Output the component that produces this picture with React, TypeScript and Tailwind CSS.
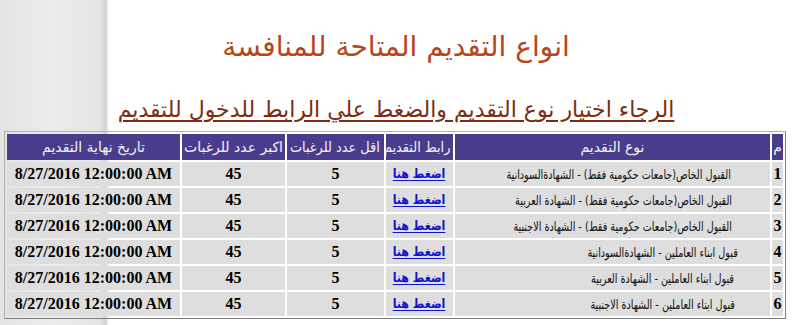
import React from "react";

const rows = [
  { n: "1", t: "القبول الخاص(جامعات حكومية فقط) - الشهادةالسودانية" },
  { n: "2", t: "القبول الخاص(جامعات حكومية فقط) - الشهادة العربية" },
  { n: "3", t: "القبول الخاص(جامعات حكومية فقط) - الشهادة الاجنبية" },
  { n: "4", t: "قبول ابناء العاملين - الشهادةالسودانية" },
  { n: "5", t: "قبول ابناء العاملين - الشهادة العربية" },
  { n: "6", t: "قبول ابناء العاملين - الشهادة الاجنبية" },
];

const ar = { fontFamily: "'DejaVu Sans', Tahoma, sans-serif" };
const serif = { fontFamily: "'Liberation Serif', 'Times New Roman', serif" };

export default function App() {
  return (
    <div className="w-[792px] h-[325px] overflow-hidden bg-[linear-gradient(to_right,#e4e4e4_0px,#ececec_50px,#e6e6e6_100px,#d0d0d0_106px,#f4f4f4_108px,#ffffff_110px)]">
      <div dir="rtl" className="flex flex-col items-center pt-[27px]" style={ar}>
        <div className="text-[28px] leading-[40px] text-[#b8461c] whitespace-nowrap">
          انواع التقديم المتاحة للمنافسة
        </div>
        <div className="mt-[28px] text-[22px] leading-[30px] text-[#7b2c12] underline underline-offset-[3px] whitespace-nowrap">
          الرجاء اختيار نوع التقديم والضغط علي الرابط للدخول للتقديم
        </div>
      </div>
      <table
        dir="rtl"
        className="ml-[4px] mt-[6px] w-[782px] table-fixed border border-t-[#b0b0b0] border-l-[#b0b0b0] border-r-[#808080] border-b-[#808080] border-separate border-spacing-[2px]"
      >
        <thead>
          <tr className="h-[26px] bg-[#4a3c8c] text-[#f4f4f4] text-[14px]" style={ar}>
            <th className="w-[11px] p-0 font-normal">م</th>
            <th className="w-[315px] p-0 font-normal">نوع التقديم</th>
            <th className="w-[67px] p-0 font-normal whitespace-nowrap">
              <span className="inline-block scale-x-[0.92]">رابط التقديم</span>
            </th>
            <th className="w-[97px] p-0 font-normal whitespace-nowrap">
              <span className="inline-block scale-x-[0.92]">اقل عدد للرغبات</span>
            </th>
            <th className="w-[103px] p-0 font-normal whitespace-nowrap">اكبر عدد للرغبات</th>
            <th className="p-0 font-normal whitespace-nowrap">تاريخ نهاية التقديم</th>
          </tr>
        </thead>
        <tbody>
          {rows.map((r) => (
            <tr key={r.n} className="h-[24px] bg-[#dedede] text-black">
              <td className="p-0 text-center text-[16px] font-bold" style={serif}>
                {r.n}
              </td>
              <td className="p-0 pl-[100px] text-center whitespace-nowrap" style={ar}>
                <span className="inline-block text-[13px] scale-x-[0.74] text-[#111]">{r.t}</span>
              </td>
              <td className="p-0 text-center text-[13px] font-bold whitespace-nowrap" style={ar}>
                <a href="#" className="inline-block scale-x-[0.85] text-[#1212c8] underline underline-offset-2">
                  اضغط هنا
                </a>
              </td>
              <td className="p-0 text-center text-[16px] font-bold" style={serif}>
                5
              </td>
              <td className="p-0 text-center text-[16px] font-bold" style={serif}>
                45
              </td>
              <td className="p-0 text-center text-[16px] font-bold whitespace-nowrap" style={serif}>
                <span dir="ltr">8/27/2016 12:00:00 AM</span>
              </td>
            </tr>
          ))}
        </tbody>
      </table>
    </div>
  );
}
